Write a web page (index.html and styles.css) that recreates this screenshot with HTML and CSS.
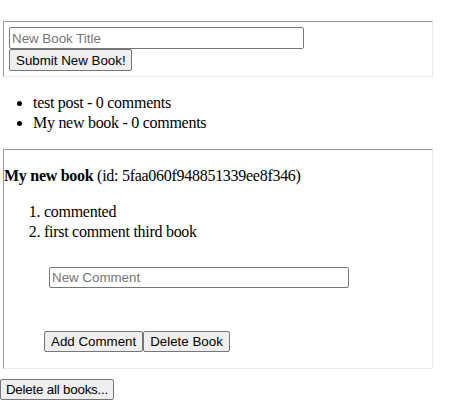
FILE: index.html
```html
<!DOCTYPE html>
<html>
<head>
<meta charset="utf-8">
<title>Books</title>
<link rel="stylesheet" href="styles.css">
</head>
<body>
<div class="page">
  <form class="card new-book">
    <input class="field title-input" type="text" placeholder="New Book Title">
    <button class="btn tall" type="button">Submit New Book!</button>
  </form>
  <ul class="book-list">
    <li>test post - 0 comments</li>
    <li>My new book - 0 comments</li>
  </ul>
  <div class="card detail">
    <p class="detail-title"><b>My new book</b> (id: 5faa060f948851339ee8f346)</p>
    <ol class="comments">
      <li>commented</li>
      <li>first comment third book</li>
    </ol>
    <form class="comment-form">
      <input class="field comment-input" type="text" placeholder="New Comment">
      <div class="actions">
        <button class="btn" type="button">Add Comment</button>
        <button class="btn" type="button">Delete Book</button>
      </div>
    </form>
  </div>
  <button class="btn delete-all" type="button">Delete all books...</button>
</div>
</body>
</html>
```
FILE: styles.css
```css
html, body {
  margin: 0;
  padding: 0;
  background: #ffffff;
}
body {
  font-family: "Liberation Serif", "Times New Roman", serif;
  font-size: 16px;
  line-height: 20px;
  color: #000000;
}
.page {
  display: flex;
  flex-direction: column;
  align-items: flex-start;
}
.card {
  box-sizing: border-box;
  width: 430px;
  margin-left: 3px;
  border-top: 1px solid #9a9a9a;
  border-left: 1px solid #9a9a9a;
  border-right: 1px solid #ebebeb;
  border-bottom: 1px solid #ebebeb;
}
.new-book {
  margin-top: 21px;
  padding: 5px;
  display: flex;
  flex-direction: column;
  align-items: flex-start;
}
.field {
  box-sizing: border-box;
  height: 21px;
  margin: 0;
  padding: 0 2px;
  border: 1px solid #767676;
  border-radius: 2px;
  background: #ffffff;
  font-family: "Liberation Sans", Arial, sans-serif;
  font-size: 13.333px;
  color: #000000;
}
.field::placeholder {
  color: #757575;
}
.title-input {
  width: 295px;
  height: 22px;
}
.btn {
  box-sizing: border-box;
  height: 21px;
  margin: 0;
  padding: 0 6px;
  border: 1px solid #767676;
  border-radius: 2px;
  background: #efefef;
  font-family: "Liberation Sans", Arial, sans-serif;
  font-size: 13.333px;
  color: #000000;
  line-height: 19px;
  white-space: nowrap;
}
.btn.tall {
  height: 22px;
  width: 123px;
}
.book-list,
.detail-title,
.comments {
  letter-spacing: -0.28px;
}
.book-list {
  margin: 16px 0;
  padding-left: 33px;
}
.detail {
  padding: 0;
}
.detail-title {
  margin: 16px 0;
}
.comments {
  margin: 16px 0;
  padding-left: 40px;
}
.comment-form {
  display: flex;
  flex-direction: column;
  align-items: flex-start;
  padding: 9px 0 16px 0;
  margin: 0;
}
.comment-input {
  width: 300px;
  margin-left: 45px;
}
.actions {
  display: flex;
  margin-top: 43px;
  margin-left: 40px;
}
.delete-all {
  margin-top: 10px;
  width: 114px;
  padding: 0 2px;
  letter-spacing: -0.2px;
}
```
